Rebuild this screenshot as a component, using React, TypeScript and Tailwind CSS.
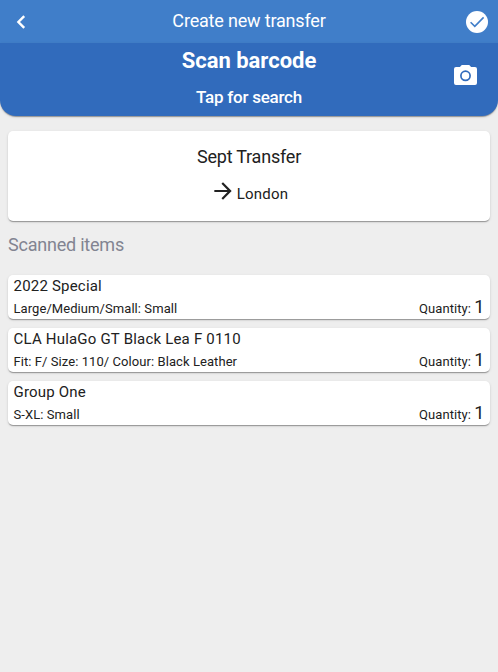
import { MdArrowForward } from 'react-icons/md';

const items = [
  { name: '2022 Special', variant: 'Large/Medium/Small: Small', quantity: 1 },
  { name: 'CLA HulaGo GT Black Lea F 0110', variant: 'Fit: F/ Size: 110/ Colour: Black Leather', quantity: 1 },
  { name: 'Group One', variant: 'S-XL: Small', quantity: 1 },
];

const cardShadow =
  'shadow-[0_2px_1px_-1px_rgba(0,0,0,0.2),0_1px_1px_0_rgba(0,0,0,0.14),0_1px_3px_0_rgba(0,0,0,0.12)]';

export default function App() {
  return (
    <div className="min-h-screen bg-[#eeeeee] font-['Roboto',sans-serif] text-[#212121]">
      {/* Title bar */}
      <header className="grid h-[43px] grid-cols-[42px_1fr_42px] items-center bg-[#407ec9] text-white">
        <button className="flex justify-center" aria-label="Back">
          <svg width="10" height="14" viewBox="0 0 10 14" fill="none" stroke="currentColor" strokeWidth="2.4">
            <path d="M8.2 1.2 2.4 7l5.8 5.8" />
          </svg>
        </button>
        <h1 className="pb-0.5 text-center text-lg leading-6 tracking-[-0.18px]">Create new transfer</h1>
        <button className="flex justify-start pl-[10px]" aria-label="Confirm">
          <svg width="22" height="22" viewBox="0 0 22 22" fill="none">
            <circle cx="11" cy="11" r="11" fill="currentColor" />
            <path d="m4.6 11.2 4.2 4.2 8.8-9" stroke="#407ec9" strokeWidth="1.6" />
          </svg>
        </button>
      </header>

      {/* Scan panel */}
      <section className={`grid h-[73px] grid-cols-[66px_1fr_66px] rounded-b-[16px] bg-[#316bbc] text-white ${cardShadow}`}>
        <div className="col-start-2 pt-1 text-center">
          <p className="text-[22px] font-bold leading-7">Scan barcode</p>
          <p className="mt-2 text-[17px] font-medium leading-7 tracking-[-0.24px]">Tap for search</p>
        </div>
        <button className="flex justify-center pt-[22px]" aria-label="Camera">
          <svg width="23" height="20" viewBox="0 0 23 20" fill="none">
            <path
              fill="currentColor"
              d="M7.8 0h7.4l1.9 2H21a2 2 0 0 1 2 2v14a2 2 0 0 1-2 2H2a2 2 0 0 1-2-2V4a2 2 0 0 1 2-2h3.9z"
            />
            <circle cx="11.5" cy="10.8" r="4.6" stroke="#316bbc" strokeWidth="1.7" />
          </svg>
        </button>
      </section>

      <main className="px-2 pt-[15px]">
        <section className={`flex h-[90px] flex-col items-center rounded-[5px] bg-white pt-3 ${cardShadow}`}>
          <h2 className="text-lg leading-7 tracking-[-0.22px]">Sept Transfer</h2>
          <p className="mt-[7px] flex items-start text-[15px] leading-7 tracking-[0.2px]">
            <MdArrowForward size={26} />
            <span className="pl-px pt-0.5">London</span>
          </p>
        </section>

        <h3 className="mt-2.5 text-lg leading-7 tracking-[-0.22px] text-[#828491]">Scanned items</h3>

        <ul className="mt-4 flex flex-col gap-[9px]">
          {items.map((item) => (
            <li key={item.name} className={`h-11 rounded-[5px] bg-white px-[5.5px] ${cardShadow}`}>
              <p className="text-[15px] leading-[22px] tracking-[0.2px]">{item.name}</p>
              <div className="-mt-px flex items-baseline justify-between text-[13px] leading-[22px] tracking-[0.07px]">
                <span>{item.variant}</span>
                <span>
                  Quantity: <span className="text-lg leading-[22px]">{item.quantity}</span>
                </span>
              </div>
            </li>
          ))}
        </ul>
      </main>
    </div>
  );
}
